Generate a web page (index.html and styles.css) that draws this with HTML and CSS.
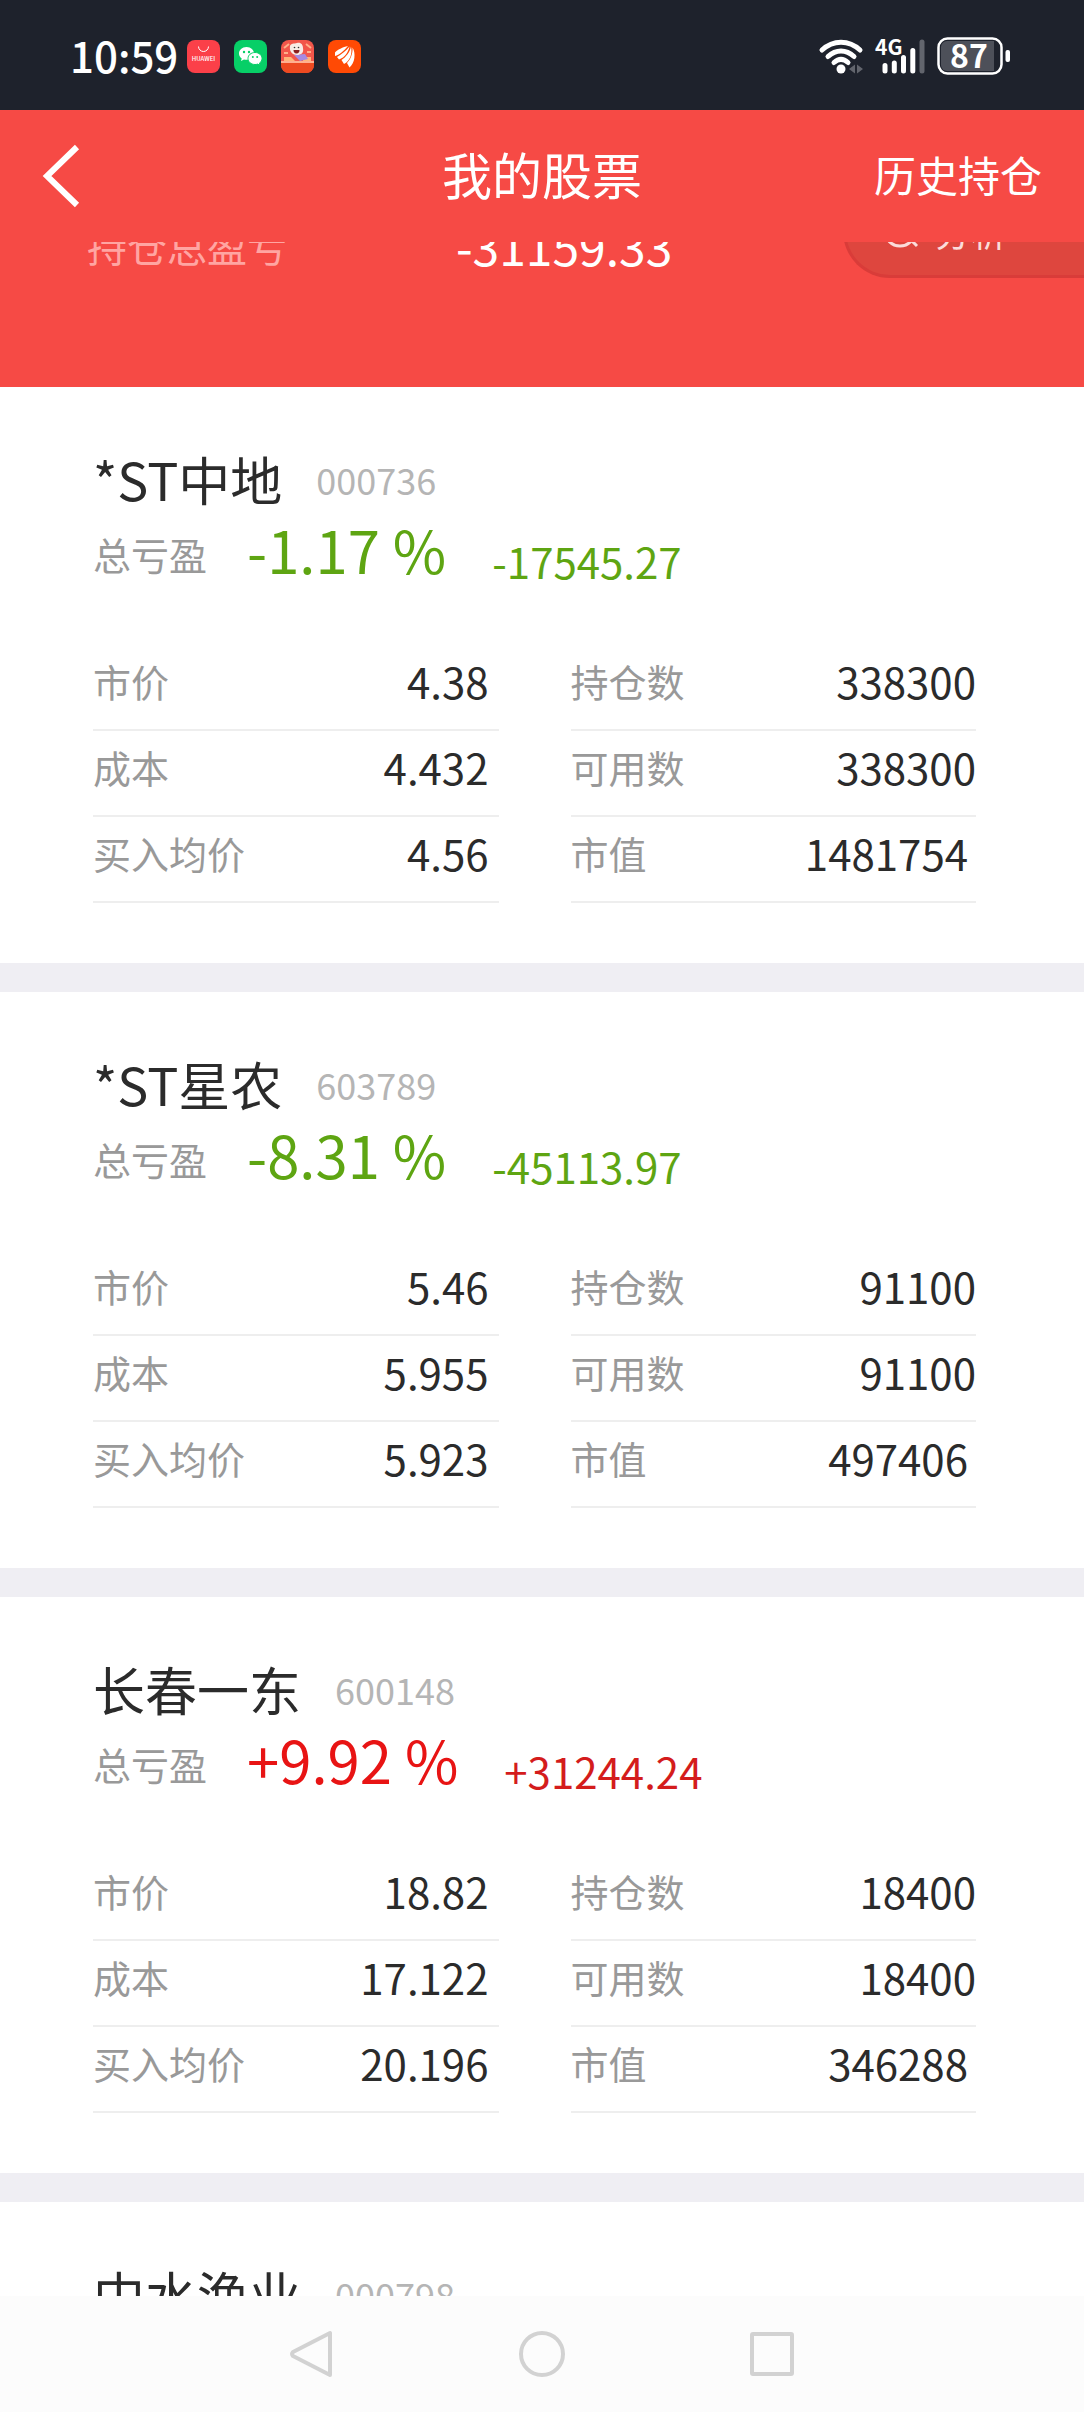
FILE: index.html
```html
<!DOCTYPE html>
<html lang="zh-CN">
<head>
  <meta charset="UTF-8">
  <meta name="viewport" content="width=device-width, initial-scale=1">
  <title>我的股票</title>
  <link rel="stylesheet" href="styles.css">
</head>
<body>
  <!-- Status bar -->
  <div class="status-bar">
    <span class="time">10:59</span>
    <div class="apps">
      <svg width="33" height="33" viewBox="0 0 33 33">
        <rect width="33" height="33" rx="8" fill="#fb4049"/>
        <path d="M11.500 6.500a5 5 0 0 0 10 0" fill="none" stroke="#fff" stroke-width="1"/>
        <text x="16.500" y="21" text-anchor="middle" class="huawei">HUAWEI</text>
      </svg>
      <svg width="33" height="33" viewBox="0 0 33 33">
        <rect width="33" height="33" rx="8" fill="#07cf67"/>
        <path d="M12.500 7C8 7 5 10 5 13.500c0 2 1 3.700 2.700 4.900L7 21l3-1.500c4 1.200 10-.8 10-6C20 10 17 7 12.500 7z" fill="#fff"/>
        <path d="M21 12.500c-4 0-7 2.600-7 6s3 6 7 6c1 0 1.800-.1 2.600-.4L26 25.300l-.6-2.100c1.600-1.100 2.600-2.800 2.600-4.700 0-3.400-3-6-7-6z" fill="#fff" stroke="#07cf67" stroke-width="1"/>
        <g fill="#07cf67"><circle cx="10" cy="12" r="1.200"/><circle cx="15" cy="12" r="1.200"/><circle cx="18.800" cy="17" r="1"/><circle cx="23.200" cy="17" r="1"/></g>
      </svg>
      <svg width="33" height="33" viewBox="0 0 33 33">
        <rect width="33" height="33" rx="8" fill="#f2564a"/>
        <path d="M3 8l5-4M25 4l5 4M3 13h4M26 12h4" stroke="#ffb08a" stroke-width="2"/>
        <path d="M3 21v-4h7l4 4zM22 17h8v4h-8z" fill="#ffb57a"/>
        <path d="M13 15l11-1 3 5-8 2z" fill="#a68be0"/>
        <path d="M9 6c1-3 4-2 7-3 4-1 6 2 6 5 1 5-2 7-6 7s-8-3-7-9z" fill="#f8ece6"/>
        <circle cx="13.500" cy="7.500" r=".8" fill="#333"/><circle cx="17.500" cy="7.500" r=".8" fill="#333"/>
        <path d="M12.500 10h6c0 2-1 3.500-3 3.500s-3-1.500-3-3.500z" fill="#8c2020"/>
        <path d="M0 22h33v3a8 8 0 0 1-8 8H8a8 8 0 0 1-8-8z" fill="#ee4a20"/>
        <path d="M0 21h33v2H0z" fill="#ffb090"/>
      </svg>
      <svg width="33" height="33" viewBox="0 0 33 33">
        <rect width="33" height="33" rx="8" fill="#ff4a05"/>
        <g fill="#fff">
          <path d="M20 6C15 7 9 10 7 12.500V16c4-1 9-5 13-10z"/>
          <path d="M21.500 6.500C18 11 13 14.500 9 17l2 2.500c6-2 9-7 10.500-13z"/>
          <path d="M23 6.500C22 12 18 17 13.500 20l2.500 4c6-3 8.500-10 7-17.500z"/>
          <path d="M24.500 7.500c.5 6-2 12-5.500 15.500l2.500 4.500C27 23 28 13 24.500 7.500z"/>
        </g>
      </svg>
    </div>
    <div class="signals">
      <svg width="44" height="36" viewBox="0 0 44 36">
        <g fill="none" stroke="#fff" stroke-width="5" stroke-linecap="round">
          <path d="M3 12C14 1.500 30 1.500 41 12"/>
          <path d="M9 18.500c8-7.500 18-7.500 26 0"/>
          <path d="M15 24.500c4.500-4 9.500-4 14 0"/>
        </g>
        <circle cx="22" cy="31" r="4.500" fill="#fff"/>
        <path d="M36 26.500v9l-6-4.500zM38 26.500v9l6-4.500z" fill="#62656d"/>
      </svg>
      <svg width="50" height="36" viewBox="0 0 50 36">
        <text x="0" y="17" class="net">4G</text>
        <g stroke="#fff" stroke-width="5" stroke-linecap="round">
          <path d="M10 27.500v5.500M19.300 25v8M28.500 19.500v13.500M37.800 12.500v20.500"/>
          <path d="M47 4v29" stroke="#62656d"/>
        </g>
      </svg>
      <svg width="73" height="38" viewBox="0 0 73 38">
        <rect x="1.500" y="1.500" width="63" height="35" rx="9" fill="none" stroke="#fff" stroke-width="2.500"/>
        <path d="M10 4h47v30H10a6 6 0 0 1-6-6V10a6 6 0 0 1 6-6z" fill="#4d5059"/>
        <rect x="68.500" y="13" width="4.500" height="12" rx="2" fill="#fff"/>
        <text x="32" y="31" text-anchor="middle" class="level">87</text>
      </svg>
    </div>
  </div>

  <header class="header">
    <button type="button" class="back" aria-label="返回">
      <svg width="38" height="62" viewBox="0 0 38 62">
        <path d="M35 2L5 31l30 29" fill="none" stroke="#fff" stroke-width="6"/>
      </svg>
    </button>
    <h1>我的股票</h1>
    <a href="#" class="history">历史持仓</a>
  </header>

  <main class="content">
    <section class="summary">
      <span class="summary-label">持仓总盈亏</span>
      <span class="summary-value">-31159.33</span>
      <button type="button" class="analyse">
        <svg width="36" height="36" viewBox="0 0 36 36" fill="none" stroke="#fbdcda" stroke-width="3">
          <circle cx="17" cy="18" r="15"/>
          <path d="M25 24l9 9"/>
        </svg>
        分析
      </button>
    </section>

    <section class="stock">
      <div class="stock-title">
        <h2>*ST中地</h2>
        <span class="code">000736</span>
      </div>
      <div class="profit down">
        <span class="profit-label">总亏盈</span>
        <span class="percent">-1.17 %</span>
        <span class="amount">-17545.27</span>
      </div>
      <dl class="details">
        <div><dt>市价</dt><dd>4.38</dd></div>
        <div><dt>持仓数</dt><dd>338300</dd></div>
        <div><dt>成本</dt><dd>4.432</dd></div>
        <div><dt>可用数</dt><dd>338300</dd></div>
        <div><dt>买入均价</dt><dd>4.56</dd></div>
        <div><dt>市值</dt><dd class="worth">1481754</dd></div>
      </dl>
    </section>

    <section class="stock">
      <div class="stock-title">
        <h2>*ST星农</h2>
        <span class="code">603789</span>
      </div>
      <div class="profit down">
        <span class="profit-label">总亏盈</span>
        <span class="percent">-8.31 %</span>
        <span class="amount">-45113.97</span>
      </div>
      <dl class="details">
        <div><dt>市价</dt><dd>5.46</dd></div>
        <div><dt>持仓数</dt><dd>91100</dd></div>
        <div><dt>成本</dt><dd>5.955</dd></div>
        <div><dt>可用数</dt><dd>91100</dd></div>
        <div><dt>买入均价</dt><dd>5.923</dd></div>
        <div><dt>市值</dt><dd class="worth">497406</dd></div>
      </dl>
    </section>

    <section class="stock">
      <div class="stock-title">
        <h2>长春一东</h2>
        <span class="code">600148</span>
      </div>
      <div class="profit up">
        <span class="profit-label">总亏盈</span>
        <span class="percent">+9.92 %</span>
        <span class="amount">+31244.24</span>
      </div>
      <dl class="details">
        <div><dt>市价</dt><dd>18.82</dd></div>
        <div><dt>持仓数</dt><dd>18400</dd></div>
        <div><dt>成本</dt><dd>17.122</dd></div>
        <div><dt>可用数</dt><dd>18400</dd></div>
        <div><dt>买入均价</dt><dd>20.196</dd></div>
        <div><dt>市值</dt><dd class="worth">346288</dd></div>
      </dl>
    </section>

    <section class="stock">
      <div class="stock-title">
        <h2>中水渔业</h2>
        <span class="code">000798</span>
      </div>
    </section>
  </main>

  <nav class="nav-bar">
    <button type="button" aria-label="返回">
      <svg width="46" height="48" viewBox="0 0 46 48">
        <path d="M41 3v42L4 26q-2-2 0-4z" fill="none" stroke="#d2d2d2" stroke-width="4" stroke-linejoin="round"/>
      </svg>
    </button>
    <button type="button" aria-label="主页">
      <svg width="48" height="48" viewBox="0 0 48 48">
        <circle cx="24" cy="24" r="21" fill="none" stroke="#d2d2d2" stroke-width="4"/>
      </svg>
    </button>
    <button type="button" aria-label="最近任务">
      <svg width="44" height="44" viewBox="0 0 44 44">
        <rect x="2" y="2" width="40" height="40" rx="1" fill="none" stroke="#d2d2d2" stroke-width="4"/>
      </svg>
    </button>
  </nav>
</body>
</html>
```

FILE: styles.css
```css
* {
    box-sizing: border-box;
}

body {
    display: flex;
    flex-direction: column;
    height: 100vh;
    margin: 0;
    overflow: hidden;
    background-color: #ffffff;
    color: #2b2b2b;
    font-family: "Noto Sans CJK SC", sans-serif;
}

h1,
h2,
dl,
dd {
    margin: 0;
    font-weight: 400;
}

button {
    padding: 0;
    border: none;
    background: none;
    font-family: inherit;
    cursor: pointer;
}

svg {
    display: block;
    overflow: visible;
}

/* Status bar */
.status-bar {
    display: flex;
    flex-shrink: 0;
    align-items: center;
    height: 110px;
    padding: 2px 74px 0 70px;
    background-color: #1e222c;
    color: #ffffff;
}

.time {
    padding-bottom: 2px;
    font-size: 42px;
    font-weight: 500;
    line-height: 60px;
}

.apps {
    display: flex;
    gap: 14px;
    margin-left: 9px;
}

.signals {
    display: flex;
    align-items: center;
    gap: 12px;
    margin-left: auto;
}

.huawei {
    fill: #ffffff;
    font-size: 6px;
    font-weight: 500;
}

.net {
    fill: #ffffff;
    font-size: 21px;
    font-weight: 700;
}

.level {
    fill: #ffffff;
    font-size: 32px;
    font-weight: 700;
}

/* Header */
.header {
    display: grid;
    flex-shrink: 0;
    grid-template-columns: 1fr auto 1fr;
    align-items: center;
    height: 132px;
    padding: 0 42px;
    background-color: #f64a45;
    color: #ffffff;
}

.back {
    justify-self: start;
}

.header h1 {
    padding-bottom: 6px;
    font-size: 50px;
    line-height: 72px;
}

.history {
    justify-self: end;
    padding-bottom: 6px;
    color: #ffffff;
    font-size: 42px;
    text-decoration: none;
}

.content {
    flex: 1;
    min-height: 0;
    overflow: hidden;
}

/* Summary, partly scrolled under the header */
.summary {
    display: grid;
    grid-template-columns: 37% 1fr 241px;
    align-items: end;
    margin-top: -58px;
    padding: 0 0 109px 87px;
    background-color: #f64a45;
    color: #ffffff;
    line-height: 60px;
}

.summary-label,
.summary-value {
    padding-bottom: 3px;
}

.summary-label {
    color: #ffa5a2;
    font-size: 40px;
}

.summary-value {
    font-size: 48px;
}

.analyse {
    display: flex;
    align-items: center;
    gap: 16px;
    height: 94px;
    padding-left: 37px;
    border: 3px solid #d93c39;
    border-right: none;
    border-radius: 47px 0 0 47px;
    background-color: #de463e;
    color: #fbdcda;
    font-size: 36px;
}

/* Stock cards */
.stock {
    padding: 60px 108px 60px 93px;
    border-bottom: 29px solid #efeef3;
}

.stock-title {
    display: flex;
    align-items: center;
    gap: 34px;
    margin-bottom: 6px;
    line-height: 64px;
}

.stock-title h2 {
    font-size: 52px;
}

.code {
    color: #b5b5b5;
    font-size: 36px;
}

.profit {
    display: flex;
    align-items: flex-end;
    margin-bottom: 64px;
}

.profit-label {
    color: #999999;
    font-size: 38px;
    line-height: 54px;
}

.percent {
    margin: 0 46px 0 40px;
    font-size: 58px;
    line-height: 64px;
}

.amount {
    font-size: 42px;
    line-height: 40px;
}

.down {
    color: #5ea512;
}

.up {
    color: #e81414;
}

.up .amount {
    color: #d41c1c;
}

.details {
    display: grid;
    grid-template-columns: 1fr 1fr;
    column-gap: 72px;
}

.details div {
    display: flex;
    align-items: center;
    justify-content: space-between;
    padding-bottom: 12px;
    border-bottom: 2px solid #eeeeee;
    line-height: 72px;
}

.details div:nth-child(odd) {
    padding-right: 10px;
}

.details dt {
    color: #999999;
    font-size: 38px;
}

.details dd {
    font-size: 42px;
}

.details .worth {
    padding-right: 8px;
}

/* Bottom navigation */
.nav-bar {
    display: flex;
    flex-shrink: 0;
    justify-content: center;
    height: 116px;
    background-color: #fcfcfc;
}

.nav-bar button {
    display: flex;
    align-items: center;
    justify-content: center;
    width: 230px;
}
```
